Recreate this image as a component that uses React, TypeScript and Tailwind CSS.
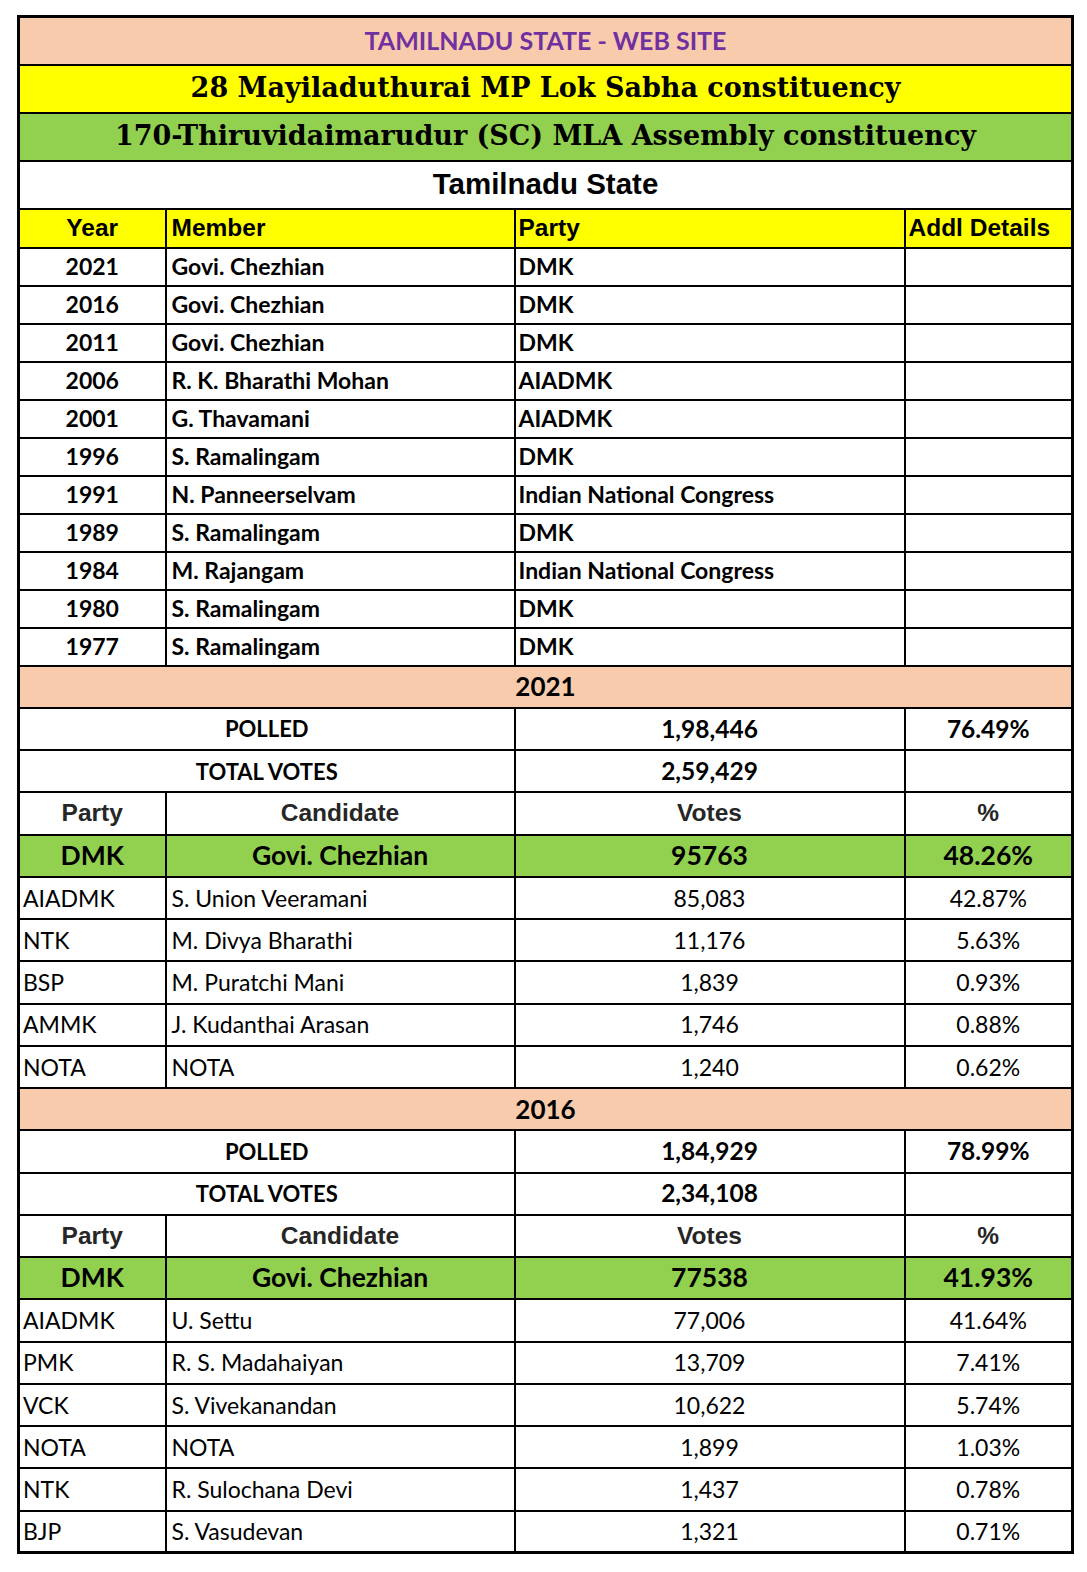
const members = [
  ["2021", "Govi. Chezhian", "DMK"],
  ["2016", "Govi. Chezhian", "DMK"],
  ["2011", "Govi. Chezhian", "DMK"],
  ["2006", "R. K. Bharathi Mohan", "AIADMK"],
  ["2001", "G. Thavamani", "AIADMK"],
  ["1996", "S. Ramalingam", "DMK"],
  ["1991", "N. Panneerselvam", "Indian National Congress"],
  ["1989", "S. Ramalingam", "DMK"],
  ["1984", "M. Rajangam", "Indian National Congress"],
  ["1980", "S. Ramalingam", "DMK"],
  ["1977", "S. Ramalingam", "DMK"],
];

type Election = {
  year: string;
  polled: string;
  pct: string;
  total: string;
  winner: string[];
  others: string[][];
};

const elections: Election[] = [
  {
    year: "2021",
    polled: "1,98,446",
    pct: "76.49%",
    total: "2,59,429",
    winner: ["DMK", "Govi. Chezhian", "95763", "48.26%"],
    others: [
      ["AIADMK", "S. Union Veeramani", "85,083", "42.87%"],
      ["NTK", "M. Divya Bharathi", "11,176", "5.63%"],
      ["BSP", "M. Puratchi Mani", "1,839", "0.93%"],
      ["AMMK", "J. Kudanthai Arasan", "1,746", "0.88%"],
      ["NOTA", "NOTA", "1,240", "0.62%"],
    ],
  },
  {
    year: "2016",
    polled: "1,84,929",
    pct: "78.99%",
    total: "2,34,108",
    winner: ["DMK", "Govi. Chezhian", "77538", "41.93%"],
    others: [
      ["AIADMK", "U. Settu", "77,006", "41.64%"],
      ["PMK", "R. S. Madahaiyan", "13,709", "7.41%"],
      ["VCK", "S. Vivekanandan", "10,622", "5.74%"],
      ["NOTA", "NOTA", "1,899", "1.03%"],
      ["NTK", "R. Sulochana Devi", "1,437", "0.78%"],
      ["BJP", "S. Vasudevan", "1,321", "0.71%"],
    ],
  },
];

// Lato stands in for Calibri, Liberation Sans for Arial
const cal = "font-['Lato',sans-serif]";
const arial = "font-['Liberation_Sans',Arial,sans-serif]";
const serif = "font-['DejaVu_Serif',Georgia,serif]";
const td = "border-2 border-black p-0";

const ElectionBlock = ({ e }: { e: Election }) => (
  <>
    <tr className="h-[42.25px] bg-[#f8cbad]">
      <td colSpan={4} className={`${td} ${cal} text-center text-[26px] font-bold`}>{e.year}</td>
    </tr>
    <tr className={`h-[42.25px] ${cal} font-bold`}>
      <td colSpan={2} className={`${td} text-center text-[22px]`}>POLLED</td>
      <td className={`${td} text-center text-[24.5px]`}>{e.polled}</td>
      <td className={`${td} text-center text-[24.5px]`}>{e.pct}</td>
    </tr>
    <tr className={`h-[42.25px] ${cal} font-bold`}>
      <td colSpan={2} className={`${td} text-center text-[22px]`}>TOTAL VOTES</td>
      <td className={`${td} text-center text-[24.5px]`}>{e.total}</td>
      <td className={td}></td>
    </tr>
    <tr className={`h-[42.25px] text-[#262626] ${arial} text-[24.5px] font-bold`}>
      {["Party", "Candidate", "Votes", "%"].map((h) => (
        <td key={h} className={`${td} text-center`}>{h}</td>
      ))}
    </tr>
    <tr className={`h-[42.25px] bg-[#92d050] ${cal} text-[26.5px] font-bold`}>
      {e.winner.map((w, i) => (
        <td key={i} className={`${td} text-center`}>{w}</td>
      ))}
    </tr>
    {e.others.map((r) => (
      <tr key={r[0] + r[1]} className={`h-[42.25px] ${cal} text-[23px]`}>
        <td className={`${td} pl-[3px]`}>{r[0]}</td>
        <td className={`${td} pl-[5px]`}>{r[1]}</td>
        <td className={`${td} text-center`}>{r[2]}</td>
        <td className={`${td} text-center`}>{r[3]}</td>
      </tr>
    ))}
  </>
);

export default function App() {
  return (
    <div className="min-h-screen bg-white pl-[17px] pt-[15px] text-black">
      <table className="w-[1054px] table-fixed border-collapse border-[3px] border-black">
        <colgroup>
          <col className="w-[147px]" />
          <col className="w-[349px]" />
          <col className="w-[390px]" />
          <col className="w-[168px]" />
        </colgroup>
        <tbody>
          <tr className="h-[48px] bg-[#f8cbad]">
            <td colSpan={4} className={`${td} ${cal} text-center text-[25px] font-bold text-[#7030a0]`}>
              TAMILNADU STATE - WEB SITE
            </td>
          </tr>
          <tr className="h-[48px] bg-[#ffff00]">
            <td colSpan={4} className={`${td} ${serif} text-center text-[27px] font-bold`}>
              28 Mayiladuthurai MP Lok Sabha constituency
            </td>
          </tr>
          <tr className="h-[48px] bg-[#92d050]">
            <td colSpan={4} className={`${td} ${serif} text-center text-[27px] font-bold`}>
              170-Thiruvidaimarudur (SC) MLA Assembly constituency
            </td>
          </tr>
          <tr className="h-[48px]">
            <td colSpan={4} className={`${td} ${arial} text-center text-[29.5px] font-bold`}>
              Tamilnadu State
            </td>
          </tr>
          <tr className={`h-[39px] bg-[#ffff00] ${arial} text-[24.5px] font-bold`}>
            <td className={`${td} text-center`}>Year</td>
            <td className={`${td} pl-[5px]`}>Member</td>
            <td className={`${td} pl-[3px]`}>Party</td>
            <td className={`${td} pl-[3px]`}>Addl Details</td>
          </tr>
          {members.map(([y, m, p]) => (
            <tr key={y} className={`h-[38px] ${cal} text-[23px] font-bold`}>
              <td className={`${td} text-center`}>{y}</td>
              <td className={`${td} pl-[5px]`}>{m}</td>
              <td className={`${td} pl-[3px]`}>{p}</td>
              <td className={td}></td>
            </tr>
          ))}
          {elections.map((e) => (
            <ElectionBlock key={e.year} e={e} />
          ))}
        </tbody>
      </table>
    </div>
  );
}
